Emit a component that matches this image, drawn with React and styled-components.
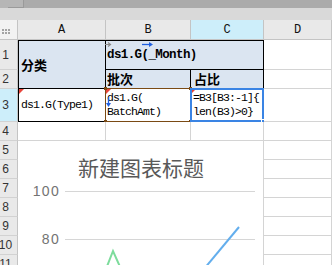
import React from 'react';
import styled, { createGlobalStyle } from 'styled-components';

const Global = createGlobalStyle`
  html, body { margin: 0; padding: 0; background: #fff; overflow: hidden; }
  body { font-family: "Liberation Sans", "Noto Sans CJK SC", sans-serif; }
`;

const GRID = '#d4d4d4';
const HEAD_LINE = '#c4c4c4';
const TABLE_BG = '#dbe5f1';
const ACTIVE_BG = '#cdeefa';

const Screen = styled.div`
  position: relative;
  width: 332px;
  height: 265px;
  overflow: hidden;
  background: #fff;
`;

const TopStrip = styled.div`
  display: flex;
  height: 8px;
  background: #ababab;
`;

const StripTab = styled.div`
  width: ${p => p.$w}px;
  background: #b6b6b6;
  border-right: ${p => (p.$edge ? '1px solid #9a9a9a' : 'none')};
  border-bottom: ${p => (p.$edge ? '1px solid #9a9a9a' : 'none')};
  box-sizing: border-box;
`;

const Band = styled.div`
  height: 12px;
  background: #d9d9d9;
`;

const Sheet = styled.div`
  display: grid;
  grid-template-columns: 18px 88px 85px 73px 68px;
  grid-template-rows: 20px 30px 19px 33px repeat(8, 19px);
`;

const Corner = styled.div`
  background: #f2f2f2;
  border-right: 1px solid ${HEAD_LINE};
  border-bottom: 1px solid ${HEAD_LINE};
  box-sizing: border-box;
  display: flex;
  align-items: center;
  padding-left: 1px;
`;

const ColHead = styled.div`
  background: ${p => (p.$active ? ACTIVE_BG : '#e9e9e9')};
  border-right: 1px solid ${HEAD_LINE};
  border-bottom: 1px solid ${HEAD_LINE};
  box-sizing: border-box;
  display: flex;
  align-items: center;
  justify-content: center;
  font-family: "Liberation Mono", monospace;
  font-size: 12px;
  color: #111;
  padding-top: 1px;
`;

const RowHead = styled.div`
  background: ${p => (p.$active ? ACTIVE_BG : '#e9e9e9')};
  border-right: 1px solid ${HEAD_LINE};
  border-bottom: 1px solid #d2d2d2;
  box-sizing: border-box;
  display: flex;
  align-items: center;
  justify-content: center;
  padding-right: 6px;
  font-family: "Liberation Sans", sans-serif;
  font-size: 12px;
  color: #333;
`;

const Cell = styled.div`
  position: relative;
  box-sizing: border-box;
  grid-column: ${p => p.$col || 'auto'};
  grid-row: ${p => p.$row || 'auto'};
  background: ${p => p.$bg || '#fff'};
  border-right: 1px solid ${p => (p.$box ? '#000' : GRID)};
  border-bottom: 1px solid ${p => (p.$box ? '#000' : GRID)};
  border-top: ${p => (p.$top ? '1px solid #000' : 'none')};
  border-left: ${p => (p.$left ? '1px solid #000' : 'none')};
  display: flex;
  flex-direction: column;
  justify-content: center;
  padding-left: ${p => p.$pad ?? 2}px;
  color: #000;
`;

const HeadText = styled.span`
  font-family: "Noto Sans CJK SC", sans-serif;
  font-weight: 700;
  font-size: 13px;
  line-height: 16px;
`;

const FieldTitle = styled.span`
  font-family: "Liberation Mono", monospace;
  font-weight: 700;
  font-size: 12.5px;
  letter-spacing: -0.6px;
  line-height: 16px;
  color: #000;
`;

const Code = styled.span`
  font-family: "Liberation Mono", monospace;
  font-size: 11.5px;
  letter-spacing: -0.9px;
  line-height: 14px;
  color: #000;
  white-space: pre;
`;

const Flag = styled.i`
  position: absolute;
  top: 0;
  left: 0;
  width: 0;
  height: 0;
  border-top: 5px solid #e8443a;
  border-right: 5px solid transparent;
`;

const Marker = styled.svg`
  position: absolute;
  left: ${p => p.$x}px;
  top: ${p => p.$y}px;
  overflow: visible;
`;

const Frame = styled.div`
  position: absolute;
  top: -1px;
  left: -1px;
  right: -1px;
  bottom: -1px;
  border: ${p => p.$w}px solid ${p => p.$color};
  pointer-events: none;
`;

const Knob = styled.i`
  position: absolute;
  width: ${p => p.$s}px;
  height: ${p => p.$s}px;
  background: ${p => p.$color};
  ${p => p.$pos}
`;

const Chart = styled.div`
  position: absolute;
  left: 18px;
  top: 141px;
  width: 245px;
  height: 124px;
  background: #fff;
  display: flex;
  flex-direction: column;
`;

const ChartTitle = styled.div`
  padding-top: 13px;
  text-align: center;
  font-family: "Noto Sans CJK SC", sans-serif;
  font-size: 21px;
  line-height: 27px;
  color: #595959;
  padding-left: 1px;
`;

const Plot = styled.svg`
  display: block;
  flex: 1;
`;

const cols = ['A', 'B', 'C', 'D'];

function DotGrid() {
  const dots = [];
  for (let r = 0; r < 2; r++)
    for (let c = 0; c < 3; c++)
      dots.push(<rect key={r + '-' + c} x={1 + c * 3} y={r * 3 + 1} width="2" height="2" fill="#a3a3a3" />);
  return (
    <svg width="11" height="7" viewBox="0 0 11 7" style={{ marginTop: 3 }}>
      {dots}
    </svg>
  );
}

export default function App() {
  return (
    <Screen>
      <Global />
      <TopStrip>
        <StripTab $w={8} />
        <StripTab $w={16} $edge />
      </TopStrip>
      <Band />
      <Sheet>
        <Corner>
          <DotGrid />
        </Corner>
        {cols.map(c => (
          <ColHead key={c} $active={c === 'C'}>{c}</ColHead>
        ))}

        <RowHead>1</RowHead>
        <Cell $col="2" $row="2 / span 2" $bg={TABLE_BG} $box $top $left>
          <HeadText>分类</HeadText>
        </Cell>
        <Cell $col="3 / span 2" $bg={TABLE_BG} $box $top $pad={1}>
          <FieldTitle>ds1.G(_Month)</FieldTitle>
          <Marker $x={-1} $y={1} width="7" height="5" viewBox="0 0 7 5">
            <path d="M0 2.5H5M3 0.5L5.5 2.5L3 4.5" stroke="#8a8a8a" strokeWidth="1.2" fill="none" />
          </Marker>
          <Marker $x={36} $y={1} width="11" height="5" viewBox="0 0 11 5">
            <path d="M0 2.5H9" stroke="#1f5fe0" strokeWidth="1.3" />
            <path d="M7 0L11 2.5L7 5Z" fill="#1f5fe0" />
          </Marker>
        </Cell>
        <Cell />

        <RowHead>2</RowHead>
        <Cell $bg={TABLE_BG} $box $pad={1}>
          <HeadText>批次</HeadText>
        </Cell>
        <Cell $bg={TABLE_BG} $box $pad={3}>
          <HeadText>占比</HeadText>
        </Cell>
        <Cell />

        <RowHead $active>3</RowHead>
        <Cell $box $left $pad={2}>
          <Flag />
          <Code>ds1.G(Type1)</Code>
        </Cell>
        <Cell $box $pad={1}>
          <Flag />
          <Code>{'ds1.G(\nBatchAmt)'}</Code>
          <Marker $x={0} $y={8} width="5" height="10" viewBox="0 0 5 10">
            <path d="M2.5 0V7" stroke="#1f5fe0" strokeWidth="1.3" />
            <path d="M0 6L2.5 10L5 6Z" fill="#1f5fe0" />
          </Marker>
          <Frame $w={1} $color="#7a4a14" />
          <Knob $s={3} $color="#7a4a14" $pos="left:-2px; top:-2px;" />
          <Knob $s={3} $color="#7a4a14" $pos="right:-2px; top:-2px;" />
          <Knob $s={3} $color="#7a4a14" $pos="left:-2px; bottom:-2px;" />
          <Knob $s={3} $color="#7a4a14" $pos="right:-2px; bottom:-2px;" />
        </Cell>
        <Cell $box $pad={2}>
          <Flag />
          <Code>{'=B3[B3:-1]{\nlen(B3)>0}'}</Code>
          <Frame $w={2} $color="#3a84e4" />
          <Knob $s={5} $color="#3a84e4" $pos="right:-3px; bottom:-3px; border:1px solid #fff; box-sizing:border-box;" />
        </Cell>
        <Cell />

        {[4, 5, 6, 7, 8, 9, 10, 11].map(n => (
          <React.Fragment key={n}>
            <RowHead>{n}</RowHead>
            <Cell />
            <Cell />
            <Cell />
            <Cell />
          </React.Fragment>
        ))}
      </Sheet>

      <Chart>
        <ChartTitle>新建图表标题</ChartTitle>
        <Plot viewBox="0 0 245 84" width="245" height="84">
          <line x1="47" y1="10.5" x2="237" y2="10.5" stroke="#d6d6d6" strokeWidth="1" />
          <line x1="47" y1="58.5" x2="237" y2="58.5" stroke="#d6d6d6" strokeWidth="1" />
          <text x="42" y="15" textAnchor="end" fontFamily="Liberation Sans, sans-serif" fontSize="14" letterSpacing="1.3" fill="#737373">100</text>
          <text x="42" y="63" textAnchor="end" fontFamily="Liberation Sans, sans-serif" fontSize="14" letterSpacing="1.3" fill="#737373">80</text>
          <polyline points="88,88 95,70 103,88" fill="none" stroke="#7ddc9c" strokeWidth="2" />
          <line x1="221" y1="46" x2="186" y2="88" stroke="#63aeed" strokeWidth="2" />
        </Plot>
      </Chart>
    </Screen>
  );
}
